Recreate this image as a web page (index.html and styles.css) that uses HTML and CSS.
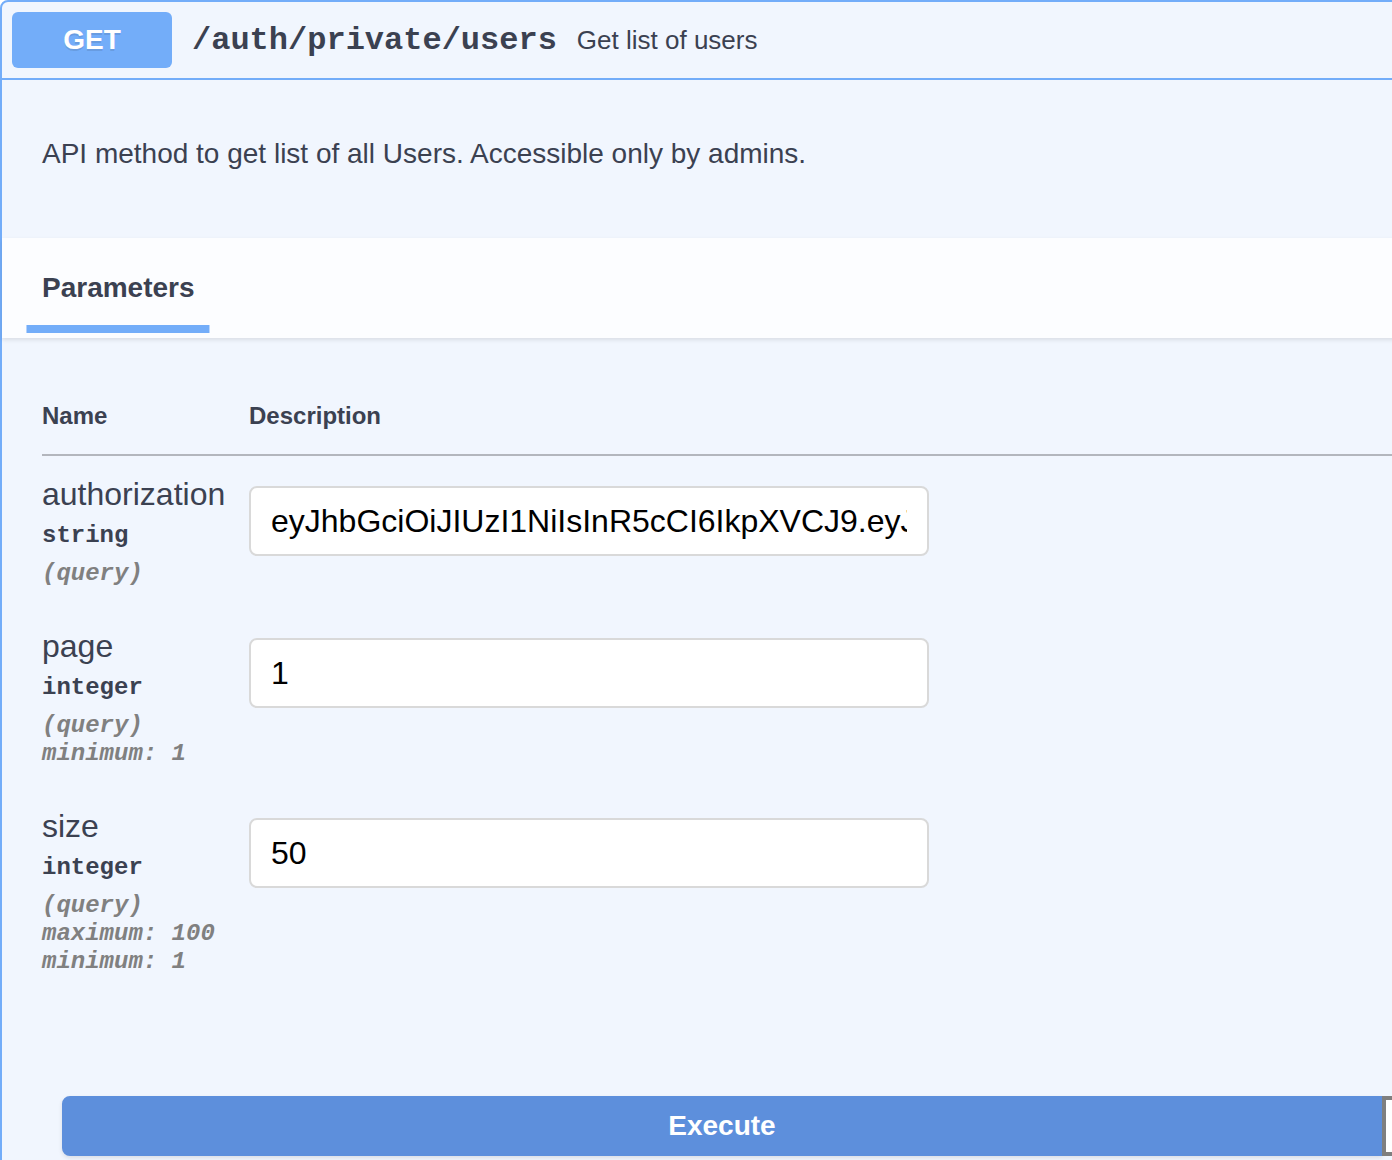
FILE: index.html
```html
<!DOCTYPE html>
<html lang="en">
<head>
<meta charset="utf-8">
<title>GET /auth/private/users</title>
<link rel="stylesheet" href="styles.css">
</head>
<body>
<div class="opblock">
  <div class="summary">
    <span class="method">GET</span>
    <span class="path">/auth/private/users</span>
    <span class="summary-desc">Get list of users</span>
  </div>
  <div class="desc-wrapper">
    <p>API method to get list of all Users. Accessible only by admins.</p>
  </div>
  <div class="section-header">
    <h4 class="tab"><span class="tab-label">Parameters</span></h4>
  </div>
  <div class="table-container">
    <table class="params">
      <thead>
        <tr><th class="col-name">Name</th><th class="col-desc">Description</th></tr>
      </thead>
      <tbody>
        <tr>
          <td class="col-name">
            <div class="p-name">authorization</div>
            <div class="p-type">string</div>
            <div class="p-in">(query)</div>
          </td>
          <td class="col-desc"><input class="p-input" type="text" value="eyJhbGciOiJIUzI1NiIsInR5cCI6IkpXVCJ9.eyJzdWIiOiIxMjM0NTY3ODkwIn0"></td>
        </tr>
        <tr>
          <td class="col-name">
            <div class="p-name">page</div>
            <div class="p-type">integer</div>
            <div class="p-in">(query)</div>
            <div class="p-ext">minimum: 1</div>
          </td>
          <td class="col-desc"><input class="p-input" type="text" value="1"></td>
        </tr>
        <tr>
          <td class="col-name">
            <div class="p-name">size</div>
            <div class="p-type">integer</div>
            <div class="p-in">(query)</div>
            <div class="p-ext">maximum: 100</div>
            <div class="p-ext">minimum: 1</div>
          </td>
          <td class="col-desc"><input class="p-input" type="text" value="50"></td>
        </tr>
      </tbody>
    </table>
  </div>
  <div class="btn-group">
    <button class="btn execute">Execute</button>
    <div class="btn clear"></div>
  </div>
</div>
</body>
</html>
```

FILE: styles.css
```css
html, body {
  margin: 0;
  padding: 0;
  overflow: hidden;
  background: #ffffff;
}

body {
  font-family: "Liberation Sans", Arial, sans-serif;
  color: #3b4151;
}

.opblock {
  width: 2768px;
  box-sizing: border-box;
  border: 2px solid #73adf9;
  border-radius: 8px;
  background: #f1f6fe;
}

.summary {
  display: flex;
  align-items: center;
  padding: 10px;
  border-bottom: 2px solid #73adf9;
}

.method {
  min-width: 160px;
  padding: 12px 0;
  line-height: 32px;
  font-size: 28px;
  font-weight: 700;
  text-align: center;
  color: #ffffff;
  background: #73adf9;
  border-radius: 6px;
  text-shadow: 0 2px 0 rgba(0, 0, 0, 0.1);
}

.path {
  padding: 0 20px;
  font-family: "Liberation Mono", "Courier New", monospace;
  font-size: 32px;
  font-weight: 700;
  color: #3b4151;
}

.summary-desc {
  font-size: 26px;
  color: #3b4151;
}

.desc-wrapper {
  padding: 30px 40px;
  margin-bottom: 10px;
}

.desc-wrapper p {
  margin: 28px 0;
  font-size: 28px;
  color: #3b4151;
}

.section-header {
  display: flex;
  align-items: center;
  min-height: 100px;
  box-sizing: border-box;
  padding: 16px 40px;
  background: #fcfdff;
  box-shadow: 0 2px 4px rgba(0, 0, 0, 0.1);
}

.tab {
  margin: 0;
  font-size: 28px;
  font-weight: 700;
  color: #3b4151;
}

.tab-label {
  position: relative;
}

.tab-label::after {
  content: "";
  position: absolute;
  left: 50%;
  bottom: -30px;
  width: 120%;
  height: 8px;
  transform: translateX(-50%);
  background: #73adf9;
}

.table-container {
  padding: 40px;
}

.params {
  width: 100%;
  border-collapse: collapse;
  table-layout: fixed;
}

.params th {
  padding: 24px 0;
  font-size: 24px;
  font-weight: 700;
  text-align: left;
  color: #3b4151;
  border-bottom: 2px solid #b3b6bd;
}

.params th.col-name {
  width: 207px;
}

.params td {
  padding: 20px 20px 20px 0;
  vertical-align: top;
}

.p-name {
  font-size: 32px;
  line-height: 36px;
  color: #3b4151;
}

.p-type {
  padding: 10px 0;
  font-family: "Liberation Mono", "Courier New", monospace;
  font-size: 24px;
  line-height: 28px;
  font-weight: 700;
  color: #3b4151;
}

.p-in,
.p-ext {
  font-family: "Liberation Mono", "Courier New", monospace;
  font-size: 24px;
  line-height: 28px;
  font-weight: 700;
  font-style: italic;
  color: #808080;
}

.p-input {
  display: block;
  width: 680px;
  height: 70px;
  box-sizing: border-box;
  margin: 10px 0;
  padding: 0 20px;
  border: 2px solid #d9d9d9;
  border-radius: 8px;
  background: #ffffff;
  font-family: "Liberation Sans", Arial, sans-serif;
  font-size: 32px;
  color: #000000;
  outline: none;
}

.btn-group {
  display: flex;
  padding: 60px;
}

.btn {
  flex: 1;
  height: 60px;
  box-sizing: border-box;
}

.execute {
  border: 2px solid #5d8fdc;
  border-radius: 8px 0 0 8px;
  background: #5d8fdc;
  color: #ffffff;
  font-family: "Liberation Sans", Arial, sans-serif;
  font-size: 28px;
  font-weight: 700;
  box-shadow: 0 2px 4px rgba(0, 0, 0, 0.1);
  padding: 0;
}

.clear {
  border: 4px solid #7f7f7f;
  border-radius: 0 8px 8px 0;
  background: #ffffff;
}
```
